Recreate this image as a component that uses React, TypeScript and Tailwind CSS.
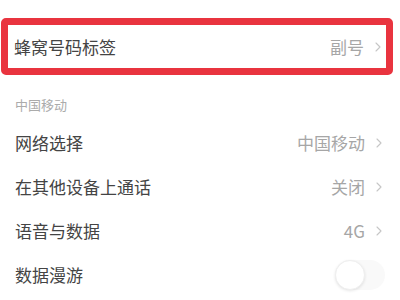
import React from "react";

const Chevron = () => (
  <svg width="6" height="10" viewBox="0 0 6 10" fill="none" className="ml-[11px] shrink-0">
    <path d="M1 1l4 4-4 4" stroke="#c6c6c6" strokeWidth="1.1" strokeLinecap="round" strokeLinejoin="round" />
  </svg>
);

const Row = ({ label, value }: { label: string; value?: string }) => (
  <div className="flex h-[44px] items-center justify-between pl-[15px] pr-[18px]">
    <span className="text-[17px] text-[#444444]">{label}</span>
    {value !== undefined && (
      <span className="flex items-center text-[17px] text-[#a6a6a6]">
        {value}
        <Chevron />
      </span>
    )}
  </div>
);

export default function App() {
  return (
    <div
      className="h-[300px] w-[400px] overflow-hidden bg-white"
      style={{ fontFamily: '"Noto Sans CJK SC", "Noto Sans", sans-serif' }}
    >
      <div className="pt-[18px] pl-[1px] pr-[7px]">
        <div className="flex h-[57px] items-center justify-between rounded-[5px] border-[7px] border-[#e9343f] pl-[6px] pr-[5px]">
          <span className="text-[17px] text-[#444444]">蜂窝号码标签</span>
          <span className="flex items-center text-[17px] text-[#a6a6a6]">
            副号
            <Chevron />
          </span>
        </div>
      </div>
      <div className="pl-[15px] pt-[22px] pb-[8px] text-[13px] leading-[16px] text-[#ababab]">中国移动</div>
      <Row label="网络选择" value="中国移动" />
      <Row label="在其他设备上通话" value="关闭" />
      <Row label="语音与数据" value="4G" />
      <div className="flex h-[44px] items-center justify-between pl-[15px] pr-[15px]">
        <span className="text-[17px] text-[#444444]">数据漫游</span>
        <div className="relative h-[30px] w-[50px] rounded-full bg-[#f9f9f9]">
          <div className="absolute left-0 top-0 h-[30px] w-[30px] rounded-full border border-[#efefef] bg-white shadow-[0_1px_3px_rgba(0,0,0,0.10)]" />
        </div>
      </div>
    </div>
  );
}
